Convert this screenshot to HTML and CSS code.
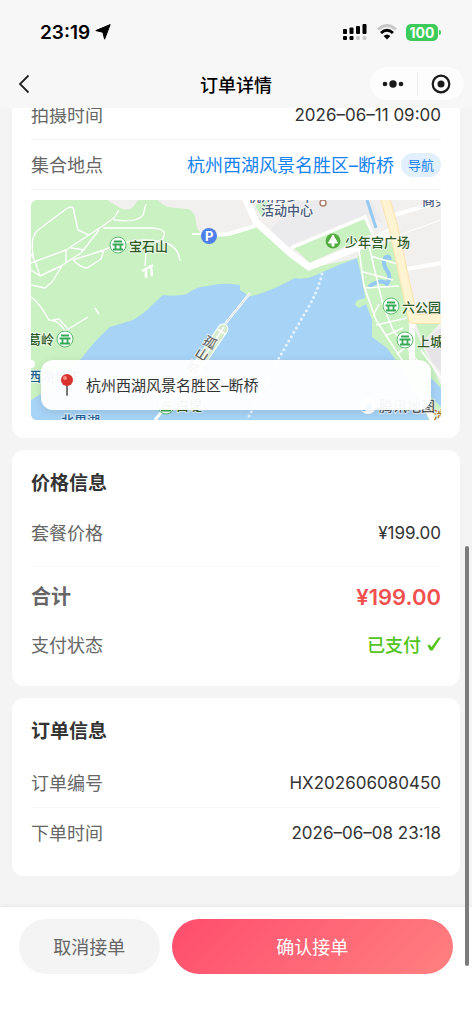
FILE: index.html
```html
<!DOCTYPE html>
<html lang="zh-CN">
<head>
<meta charset="UTF-8" />
<meta name="viewport" content="width=device-width, initial-scale=1" />
<title>订单详情</title>
<link rel="stylesheet" href="styles.css">
</head>
<body>

  <!-- Status bar + navigation -->
  <header class="header">
    <div class="status-bar">
      <div class="status-time">
        <span>23:19</span>
        <svg width="16" height="16" viewBox="0 0 16 16"><path d="M15.2 0.6 L9.6 15.2 L7.8 8.2 L0.8 6.6 Z" fill="#000" stroke="#000" stroke-linejoin="round"/></svg>
      </div>
      <div class="status-icons">
        <svg width="26" height="18" viewBox="0 0 26 18">
          <rect x="1" y="6" width="4" height="5" rx="1"/>
          <rect x="7.5" y="4.5" width="4" height="6.5" rx="1"/>
          <rect x="14" y="3" width="4" height="8" rx="1"/>
          <rect x="20.5" y="1" width="4" height="10" rx="1"/>
          <rect x="1" y="13" width="4" height="4" rx="1"/>
          <rect x="7.5" y="13" width="4" height="4" rx="1"/>
          <rect x="14" y="13" width="4" height="4" rx="1.5" fill="#ccc"/>
          <rect x="20.5" y="13" width="4" height="4" rx="1.5" fill="#ccc"/>
        </svg>
        <svg width="22" height="18" viewBox="0 0 22 18" fill="none">
          <path d="M2 6.5 Q11 -1.5 20 6.5" stroke="#c8c8c8" stroke-width="3"/>
          <path d="M5 10 Q11 4.600 17 10" stroke="#000" stroke-width="3"/>
          <path d="M7.600 13 Q11 10 14.400 13 L11 16.500 Z" fill="#000"/>
        </svg>
        <span class="battery">100</span>
      </div>
    </div>
    <div class="nav-bar">
      <button class="back-btn" aria-label="返回">
        <svg width="12" height="20" viewBox="0 0 12 20" fill="none"><path d="M10.500 1.500 L2 10 L10.500 18.500" stroke="#222" stroke-width="1.800"/></svg>
      </button>
      <h1 class="nav-title">订单详情</h1>
      <div class="capsule">
        <button class="capsule-btn" aria-label="更多">
          <svg width="22" height="10" viewBox="0 0 22 10" fill="#1a1a1a"><circle cx="3" cy="5" r="2.300"/><circle cx="11" cy="5" r="3.700"/><circle cx="19" cy="5" r="2.300"/></svg>
        </button>
        <button class="capsule-btn" aria-label="关闭">
          <svg width="20" height="20" viewBox="0 0 20 20"><circle cx="10" cy="10" r="8.300" fill="none" stroke="#1a1a1a" stroke-width="2.200"/><circle cx="10" cy="10" r="3.500" fill="#1a1a1a"/></svg>
        </button>
      </div>
    </div>
  </header>

  <main class="content">
    <section class="card">
      <dl class="rows">
        <div class="row line">
          <dt>拍摄时间</dt>
          <dd>2026–06–11 09:00</dd>
        </div>
        <div class="row line">
          <dt>集合地点</dt>
          <dd class="place"><a href="#map">杭州西湖风景名胜区–断桥</a><button class="go-btn">导航</button></dd>
        </div>
      </dl>

      <!-- Map -->
      <div class="map" id="map">
        <svg class="map-art" viewBox="0 0 410 220" preserveAspectRatio="xMidYMid slice">
          <rect width="410" height="220" fill="#f2f0ee"/>
          <path d="M262 0 H340 L352 24 L336 14 L270 40 L256 48 L240 30 Z" fill="#ebebed"/>

          <!-- parks -->
          <g fill="#c9f1c2">
            <path d="M0 0 H76 L89 8 Q96 11 101 8 L107 0 H127 Q131 5 137 7 L157 9 Q163 11 165 20 Q165 34 177 36 L209 30 L227 26 L259 53 L279 68 L327 58 L340 220 H0 Z"/>
            <path d="M262 47 L334 17 L341 34 L279 63 Z"/>
            <path d="M224 5 L238 0 L231 18 Z"/>
            <path d="M326 58 L330 50 L365 40 L380 110 L384 130 L410 185 V220 H380 L330 130 Z"/>
            <path d="M384 122 H410 L392 142 Z"/>
          </g>
          <path d="M392 142 L410 128 V172 L400 160 Z" fill="#e7e4e7"/>

          <!-- lake -->
          <path d="M102 120 Q114 113 120 106 L132 95 Q145 97 156 94 Q166 86 177 86 Q194 82 209 85 L209 90 L214 93 Q217 98 225 95 Q242 90 264 78 Q275 80 285 75 Q304 66 326 58 Q332 82 335 104 L341 120 V137 L356 148 L367 163 L391 205 L398 220 H0 V200 L16 190 Q34 172 51 158 Q62 142 79 127 Z" fill="#a7d3f6"/>
          <path d="M398 176 L410 188 V207 L400 197 Z" fill="#a7d3f6"/>
          <path d="M324 105 Q324 100 331 99 L335 98 L335 104 L328 108 Z" fill="#c9f1c2"/>
          <g stroke="#93c9f3" fill="none">
            <path d="M336 0 L345 28" stroke-width="3"/>
            <path d="M338 87 Q350 78 356 84 Q360 78 357 72 Q351 64 354 58 Q358 54 359 60" stroke-width="4"/>
          </g>

          <!-- footpaths -->
          <g stroke="#fff" stroke-width="1.400" fill="none" stroke-linejoin="round">
            <path d="M3 60 Q-2 38 7 30 L35 9 Q43 4 43 12 L47 30 L58 35"/>
            <path d="M0 63 L35 50 L70 27 L83 18 L88 10"/>
            <path d="M83 20 Q107 23 112 15 L115 4"/>
            <path d="M72 28 H118 Q138 28 132 38 L130 45"/>
            <path d="M68 30 L50 53 L30 66 L9 76 L0 70 M9 76 L5 64 L0 54"/>
            <path d="M0 85 L14 88 L21 82 L31 66 M35 50 V63 M40 48 L54 50 M42 60 Q50 68 56 68 L70 59 L73 50 L42 60"/>
            <path d="M73 50 Q100 37 126 41 Q147 43 149 61 M115 52 L114 66"/>
            <path d="M0 97 Q8 102 18 120 Q28 120 34 131 L57 117 M22 120 L28 119 L38 130 M64 108 L68 114"/>
          </g>
          <path d="M111 71 L122 65 M115 68 V78 M120 67 L121 76" stroke="#fff" stroke-width="2.500"/>

          <!-- streets -->
          <g stroke="#fff" fill="none">
            <path d="M161 34 H176" stroke-width="2"/>
            <path d="M180 35 L198 34 L230 24" stroke-width="4"/>
            <path d="M214 -2 L225 22 L259 53 L278 67 L332 45 L360 31" stroke-width="7"/>
            <path d="M260 48 L334 17 L342 35" stroke-width="3"/>
            <path d="M364 15 L410 1 M376 69 L410 63" stroke-width="4"/>
            <path d="M368 35 L410 20" stroke-width="1"/>
            <path d="M328 50 L333 86 L345 120 L371 160 L400 190 M338 46 L352 105 L362 130 L390 165 M332 72 L362 80 M334 88 L368 86 M340 56 L366 64 M348 104 L342 116 M345 125 L376 118 M354 136 L372 128 M366 154 L384 140 M390 150 L410 178" stroke-width="1.600"/>
            <path d="M381 122 V165 M388 190 L402 220" stroke-width="6"/>
          </g>
          <path d="M354 -2 L363 30 L371 68 L382 119 H412" stroke="#fbe3ae" stroke-width="10" stroke-linejoin="round" fill="none"/>
          <path d="M354 -2 L363 30 L371 68 L382 119 H412" stroke="#fff4d2" stroke-width="8" stroke-linejoin="round" fill="none"/>

          <!-- causeway -->
          <path d="M219 93 L194 124" stroke="#fff" stroke-width="2.500" fill="none"/>
          <path d="M219 93 L194 124" stroke="#d5ddd6" stroke-width="1" fill="none"/>
          <path d="M160 176 L124 220" stroke="#fff" stroke-width="3" fill="none"/>
          <path d="M192 129 L160 176" stroke="#fff" stroke-width="11" stroke-linecap="round"/>
          <path d="M192 129 L160 176" stroke="#d3ebcb" stroke-width="9" stroke-linecap="round"/>
          <path d="M193 127 L160 176 M186 129 L194 134" stroke="#fff" stroke-width="1.600"/>
          <path d="M291 74 Q286 94 274 113 L248 158 L216 220" stroke="#e5f4ff" stroke-width="3" stroke-dasharray="0 5" stroke-linecap="round" fill="none"/>

          <!-- pavilion markers -->
          <g id="pavilion">
            <circle cx="87" cy="45" r="8" fill="#fff" stroke="#5cbb6d"/>
            <path d="M83 41.500 H91 M81.500 44.500 H92.500 M84.500 45 V49 M89.500 45 V49 M82 49.500 H92" stroke="#35a853" stroke-width="1.800"/>
          </g>
          <use href="#pavilion" x="-53" y="94"/>
          <use href="#pavilion" x="273" y="61"/>
          <use href="#pavilion" x="287" y="95"/>
          <use href="#pavilion" x="48" y="161"/>
          <circle cx="0" cy="164" r="4" fill="#fff"/>
          <circle cx="302" cy="41" r="7.500" fill="#55ac43"/>
          <path d="M302 35 L306.500 43 H303 V46 H301 V43 H297.500 Z" fill="#fff" stroke="#fff" stroke-linejoin="round"/>
          <circle cx="178" cy="36" r="8" fill="#4f7fe8"/>
          <circle cx="292" cy="3" r="3" fill="#fff" stroke="#a9816b" stroke-width="1.500"/>

          <g class="map-label park">
            <text x="98" y="51">宝石山</text>
            <text x="314" y="47">少年宫广场</text>
            <text x="371" y="112">六公园</text>
            <text x="386" y="146">上城</text>
            <text x="-3" y="144">葛岭</text>
            <text x="145" y="210">白堤</text>
          </g>
          <g class="map-label area">
            <text x="217" y="1">杭州青少年</text>
            <text x="230" y="15">活动中心</text>
            <text x="391" y="5">商务</text>
          </g>
          <g class="map-label water">
            <text x="-3" y="181">西湖景庄</text>
            <text x="30" y="225">北里湖</text>
          </g>
          <g class="map-label road">
            <text transform="translate(171 143) rotate(32)">孤</text>
            <text transform="translate(163 155) rotate(32)">山</text>
            <text transform="translate(154 168) rotate(32)">路</text>
          </g>
          <text class="map-label parking" x="174" y="41">P</text>
          <text class="map-label food" x="402" y="220">涉</text>

          <circle cx="337" cy="206" r="8" fill="#fff"/>
          <path d="M331 211 L340 201 L341 209 Z" fill="#2b8fe5"/>
          <text class="map-label brand" x="348" y="211">腾讯地图</text>
        </svg>
        <div class="map-callout">
          <svg width="14" height="24" viewBox="0 0 14 24">
            <path d="M7 11 V22" stroke="#77777b" stroke-width="2" stroke-linecap="round"/>
            <circle cx="7" cy="7" r="6" fill="#d9332f"/>
            <circle cx="5" cy="5" r="2" fill="#f68c82"/>
          </svg>
          <span>杭州西湖风景名胜区–断桥</span>
        </div>
      </div>
    </section>

    <section class="card">
      <h2 class="card-title">价格信息</h2>
      <dl class="rows price-rows">
        <div class="row">
          <dt>套餐价格</dt>
          <dd>¥199.00</dd>
        </div>
        <div class="row total">
          <dt>合计</dt>
          <dd>¥199.00</dd>
        </div>
        <div class="row">
          <dt>支付状态</dt>
          <dd class="paid">已支付 <svg width="14" height="14" viewBox="0 0 14 14"><path d="M0.500 8.500 L2.500 7.500 L4.500 10 L11.500 0.500 L14 0.500 L5.500 13.500 L3 13.500 Z" fill="#52c41a"/></svg></dd>
        </div>
      </dl>
    </section>

    <section class="card">
      <h2 class="card-title">订单信息</h2>
      <dl class="rows">
        <div class="row line">
          <dt>订单编号</dt>
          <dd>HX202606080450</dd>
        </div>
        <div class="row">
          <dt>下单时间</dt>
          <dd>2026–06–08 23:18</dd>
        </div>
      </dl>
    </section>
  </main>

  <footer class="actions">
    <button class="cancel-btn">取消接单</button>
    <button class="confirm-btn">确认接单</button>
  </footer>

  <div class="scroll-thumb"></div>

</body>
</html>
```

FILE: styles.css
```css
* {
  box-sizing: border-box;
}
body {
  margin: 0;
  height: 100vh;
  display: flex;
  flex-direction: column;
  overflow: hidden;
  background: #f4f4f4;
  color: #333;
  font-family: Inter, "Noto Sans CJK SC", sans-serif;
  font-size: 17px;
}
h1, h2, dl, dd {
  margin: 0;
}
button {
  padding: 0;
  border: none;
  background: none;
  color: inherit;
  font-family: inherit;
  cursor: pointer;
}
svg {
  display: block;
  flex: none;
}

/* Header */
.header {
  flex: none;
  background: #f7f7f7;
  padding-bottom: 8px;
}
.status-bar {
  height: 60px;
  padding: 4px 32px 0 40px;
  display: flex;
  align-items: center;
  justify-content: space-between;
}
.status-time {
  display: flex;
  align-items: center;
  gap: 5px;
  color: #000;
  font-size: 19px;
  font-weight: 600;
}
.status-icons {
  display: flex;
  align-items: center;
  gap: 8px;
}
.battery {
  position: relative;
  width: 32px;
  height: 17px;
  margin-right: 2px;
  border-radius: 5px;
  background: #3ccb5a;
  color: #fff;
  font-size: 14px;
  font-weight: 700;
  line-height: 17px;
  text-align: center;
}
.battery::after {
  content: "";
  position: absolute;
  top: 6px;
  right: -3px;
  width: 2px;
  height: 5px;
  border-radius: 0 2px 2px 0;
  background: #3ccb5a;
}
.nav-bar {
  height: 40px;
  padding: 7px 8px 0 18px;
  display: grid;
  grid-template-columns: 1fr auto 1fr;
  align-items: center;
}
.back-btn {
  justify-self: start;
}
.nav-title {
  margin-right: 10px;
  color: #000;
  font-size: 18px;
  font-weight: 500;
}
.capsule {
  justify-self: end;
  width: 94px;
  height: 33px;
  border-radius: 17px;
  background: #fdfdfd;
  display: flex;
  align-items: center;
}
.capsule-btn {
  flex: 1;
  height: 22px;
  display: flex;
  align-items: center;
  justify-content: center;
}
.capsule-btn + .capsule-btn {
  border-left: 1px solid #ececec;
}

/* Content, scrolled to the end */
.content {
  flex: 1;
  min-height: 0;
  padding: 0 12px 31px;
  display: flex;
  flex-direction: column;
  justify-content: flex-end;
  gap: 12px;
  overflow: hidden;
}
.card {
  flex: none;
  padding: 20px 19px 18px;
  border-radius: 12px;
  background: #fff;
}
.card-title {
  margin-bottom: 12px;
  font-size: 19px;
  font-weight: 600;
  line-height: 28px;
}
.row {
  height: 50px;
  display: flex;
  align-items: center;
  justify-content: space-between;
}
.row.line {
  border-bottom: 1px solid #f5f5f5;
}
.row dt {
  padding-bottom: 2px;
  color: #666;
  font-size: 18px;
}
.place {
  display: flex;
  align-items: center;
  gap: 7px;
}
.place a {
  padding-bottom: 2px;
  color: #1683f2;
  font-size: 18px;
  text-decoration: none;
}
.go-btn {
  padding: 0 7px;
  height: 24px;
  border-radius: 12px;
  background: #e2effd;
  color: #1683f2;
  font-size: 13px;
}
.price-rows .row {
  height: 46px;
}
.price-rows .total {
  height: 56px;
  margin-top: 10px;
  padding-top: 4px;
  border-top: 1px solid #f7f7f7;
  font-weight: 600;
}
.total dt {
  font-size: 20px;
}
.total dd {
  color: #f2504f;
  font-size: 22px;
}
.row .paid {
  padding-bottom: 2px;
  display: flex;
  align-items: center;
  gap: 6px;
  color: #52c41a;
  font-size: 18px;
  font-weight: 500;
}

/* Map */
.map {
  position: relative;
  height: 220px;
  margin-top: 10px;
  border-radius: 6px;
  overflow: hidden;
}
.map-art {
  width: 100%;
  height: 100%;
}
.map-label {
  font-size: 13px;
  font-weight: 500;
  paint-order: stroke;
  stroke: rgba(255, 255, 255, 0.6);
  stroke-width: 2px;
}
.park {
  fill: #2f5a26;
}
.area {
  fill: #47597a;
}
.water {
  fill: #1f5f94;
}
.road {
  fill: #666;
}
.food {
  fill: #a5682a;
}
.brand {
  fill: #555;
  font-size: 14px;
}
.parking {
  fill: #fff;
  stroke: none;
  font-weight: 700;
}
.map-callout {
  position: absolute;
  left: 10px;
  right: 10px;
  bottom: 10px;
  height: 50px;
  padding: 0 19px;
  display: flex;
  align-items: center;
  gap: 12px;
  border-radius: 12px;
  background: rgba(255, 255, 255, 0.95);
  box-shadow: 0 2px 8px rgba(0, 0, 0, 0.1);
  font-size: 15px;
}
.map-callout span {
  padding-bottom: 2px;
}

/* Bottom actions */
.actions {
  flex: none;
  display: flex;
  gap: 12px;
  padding: 12px 19px 50px;
  background: #fff;
  box-shadow: 0 -1px 4px rgba(0, 0, 0, 0.05);
}
.actions button {
  height: 55px;
  padding-bottom: 2px;
  border-radius: 28px;
  font-size: 18px;
}
.cancel-btn {
  flex: 1;
  background: #f4f4f4;
  color: #666;
}
.confirm-btn {
  flex: 2;
  background: linear-gradient(135deg, #ff4d6d, #ff8080);
  color: #fff;
}
.scroll-thumb {
  position: fixed;
  right: 3px;
  bottom: 58px;
  width: 4px;
  height: 41%;
  border-radius: 2px;
  background: #7c7c7c;
}
```
